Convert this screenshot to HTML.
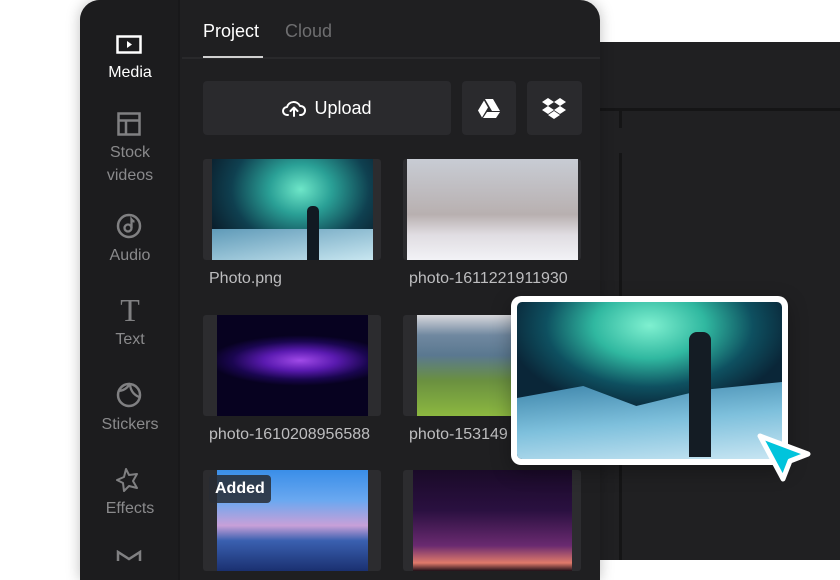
<!DOCTYPE html>
<html><head><style>
*{margin:0;padding:0;box-sizing:border-box}
body{width:840px;height:560px;background:#fff;position:relative;overflow:hidden;font-family:"Liberation Sans",sans-serif}
.abs{position:absolute}
.side{color:#8a8a8c;font-size:16px;text-align:center;width:100px;left:0;line-height:23px}
.lbl{color:#bdbdbf;font-size:16px;position:absolute;white-space:nowrap}
.card{position:absolute;background:#2c2c2f;border-radius:3px;overflow:hidden}
.card div{position:absolute;top:0;bottom:0}
</style></head><body>
<div class="abs" style="left:560px;top:42px;width:280px;height:518px;background:#202022"></div>
<div class="abs" style="left:600px;top:108px;width:240px;height:3px;background:#151516"></div>
<div class="abs" style="left:619px;top:111px;width:3px;height:17px;background:#151516"></div>
<div class="abs" style="left:619px;top:153px;width:3px;height:407px;background:#151516"></div>
<div class="abs" style="left:80px;top:0;width:520px;height:580px;background:#1f1f21;border-radius:20px 20px 0 0;box-shadow:0 0 14px rgba(0,0,0,.25);overflow:hidden">
  <div class="abs" style="left:0;top:0;width:100px;height:580px;background:#1c1c1e;border-right:2px solid #18181a"></div>
  <svg class="abs" style="left:36px;top:35px" width="26" height="20"><rect x="1.5" y="1.5" width="23" height="16" fill="none" stroke="#fff" stroke-width="2.5"/><path d="M11 6v7l5-3.5z" fill="#fff"/></svg>
  <div class="abs side" style="top:61px;color:#fff">Media</div>
  <svg class="abs" style="left:37px;top:112px" width="24" height="24"><rect x="1.5" y="1.5" width="21" height="21" fill="none" stroke="#808082" stroke-width="2.5"/><path d="M1.5 8.5h21M9 8.5v14" stroke="#808082" stroke-width="2.5"/></svg>
  <div class="abs side" style="top:141px">Stock<br>videos</div>
  <svg class="abs" style="left:36px;top:213px" width="26" height="26"><circle cx="13" cy="13" r="11" fill="none" stroke="#808082" stroke-width="2.5"/><circle cx="12" cy="15" r="3.5" fill="none" stroke="#808082" stroke-width="2.3"/><path d="M15.5 15V6.5q1.5 2 3 2" fill="none" stroke="#808082" stroke-width="2.3"/></svg>
  <div class="abs side" style="top:244px">Audio</div>
  <div class="abs side" style="top:294px;font-size:32px;font-family:'Liberation Serif',serif;line-height:32px;color:#808082">T</div>
  <div class="abs side" style="top:328px">Text</div>
  <svg class="abs" style="left:36px;top:382px" width="26" height="26"><circle cx="13" cy="13" r="11" fill="none" stroke="#808082" stroke-width="2.5"/><path d="M3 9q8 -1 11 -8M14 1q0 10 9 14" fill="none" stroke="#808082" stroke-width="2.3"/></svg>
  <div class="abs side" style="top:413px">Stickers</div>
  <svg class="abs" style="left:36px;top:467px" width="26" height="26"><path d="M10 2l3 6 8-1-4 7 4 7-8-2-5 5-1-8-6-3 7-3z" fill="none" stroke="#808082" stroke-width="2" stroke-linejoin="round"/></svg>
  <div class="abs side" style="top:497px">Effects</div>
  <svg class="abs" style="left:36px;top:550px" width="26" height="12"><path d="M2 11V2l11 7 11-7v9" fill="none" stroke="#808082" stroke-width="2.5"/></svg>

  <div class="abs" style="left:123px;top:21px;color:#fff;font-size:18px">Project</div>
  <div class="abs" style="left:205px;top:21px;color:#6e6e70;font-size:18px">Cloud</div>
  <div class="abs" style="left:102px;top:57px;width:418px;height:2px;background:#29292b"></div>
  <div class="abs" style="left:123px;top:56px;width:60px;height:2px;background:#d0d0d0"></div>

  <div class="abs" style="left:123px;top:81px;width:248px;height:54px;background:#2a2a2d;border-radius:4px;color:#fff;font-size:18px;line-height:54px;text-align:center">
    <svg style="vertical-align:-4px;margin-right:8px" width="24" height="20"><path d="M6 17H5a4 4 0 0 1 0-8 7 7 0 0 1 13-1 4.5 4.5 0 0 1 1 9h-1M12 18v-8M8.5 13l3.5-3.5 3.5 3.5" fill="none" stroke="#fff" stroke-width="2" stroke-linecap="round" stroke-linejoin="round"/></svg>Upload</div>
  <div class="abs" style="left:382px;top:81px;width:54px;height:54px;background:#2a2a2d;border-radius:4px"><svg class="abs" style="left:16px;top:18px" width="22" height="19"><path d="M7 0h8l7 12h-8zM6 1.5l4 7-6 10-4-7zM9 13h13l-4 6H5z" fill="#fff"/></svg></div>
  <div class="abs" style="left:447px;top:81px;width:55px;height:54px;background:#2a2a2d;border-radius:4px"><svg class="abs" style="left:15px;top:16px" width="24" height="22"><path d="M6 1l6 4-6 4-6-4zM18 1l6 4-6 4-6-4zM6 9l6 4-6 4-6-4zM18 9l6 4-6 4-6-4zM12 14l6 4-6 4-6-4z" fill="#fff"/></svg></div>

  <div class="card" style="left:123px;top:159px;width:178px;height:101px"><div style="left:9px;width:161px;background:radial-gradient(ellipse at 55% 30%,#6ee6c8 0%,#2aa096 25%,#0f4050 55%,#0a1e2c 80%);"></div><div style="left:9px;width:161px;top:70px;background:linear-gradient(170deg,#5f9ab8,#c8e6f0)"></div><div style="left:104px;width:12px;top:47px;background:#111a22;border-radius:5px 5px 0 0"></div></div>
  <div class="card" style="left:323px;top:159px;width:178px;height:101px"><div style="left:4px;width:171px;background:linear-gradient(#c8ccd4,#b8b0b0 55%,#e0dde2 75%,#f2f2f6)"></div></div>
  <div class="lbl" style="left:129px;top:270px">Photo.png</div>
  <div class="lbl" style="left:329px;top:270px">photo-1611221911930</div>

  <div class="card" style="left:123px;top:315px;width:178px;height:101px"><div style="left:14px;width:151px;background:radial-gradient(ellipse 60% 25% at 55% 45%,#a04ae8 0%,#5a1ab0 40%,#1a0650 75%,#070220)"></div></div>
  <div class="card" style="left:323px;top:315px;width:178px;height:101px"><div style="left:14px;width:164px;background:linear-gradient(#d8d8dc,#7088a0 20%,#5a7890 40%,#6a9040 65%,#8cb840)"></div></div>
  <div class="lbl" style="left:129px;top:426px">photo-1610208956588</div>
  <div class="lbl" style="left:329px;top:426px">photo-153149</div>

  <div class="card" style="left:123px;top:470px;width:178px;height:101px"><div style="left:14px;width:151px;background:linear-gradient(#3a8ee8,#6aa8f0 30%,#c8a0d8 55%,#3a60b0 70%,#1a3070)"></div></div>
  <div class="abs" style="left:129px;top:475px;padding:0 6px;height:28px;line-height:28px;background:rgba(40,44,50,.85);border-radius:4px;color:#fff;font-size:16px;font-weight:bold">Added</div>
  <div class="card" style="left:323px;top:470px;width:178px;height:101px"><div style="left:10px;width:159px;background:linear-gradient(#1a0a28,#2a1040 40%,#6a2a70 75%,#e07a6a 92%,#201018)"></div></div>
</div>

<div class="abs" style="left:511px;top:296px;width:277px;height:169px;background:#fff;border-radius:10px;padding:6px;box-shadow:0 6px 20px rgba(0,0,0,.3)">
  <div style="position:relative;width:265px;height:157px;border-radius:5px;overflow:hidden;background:radial-gradient(ellipse 60% 60% at 50% 15%,#7ff0d0 0%,#30b8a0 35%,#0e5060 65%,#0a2638 90%)">
    <div class="abs" style="left:0;top:80px;width:265px;height:80px;background:linear-gradient(175deg,#3a82a8,#7ec0dc 50%,#cde8f4);clip-path:polygon(0 20%,25% 5%,45% 30%,70% 10%,100% 0,100% 100%,0 100%)"></div>
    <div class="abs" style="left:172px;top:30px;width:22px;height:125px;background:#141c24;border-radius:8px 8px 0 0"></div>
  </div>
</div>
<svg class="abs" style="left:752px;top:428px" width="66" height="66"><path d="M8 8l48 18-18 7-7 18z" fill="#00c4dc" stroke="#fff" stroke-width="5" stroke-linejoin="round"/></svg>
</body></html>
